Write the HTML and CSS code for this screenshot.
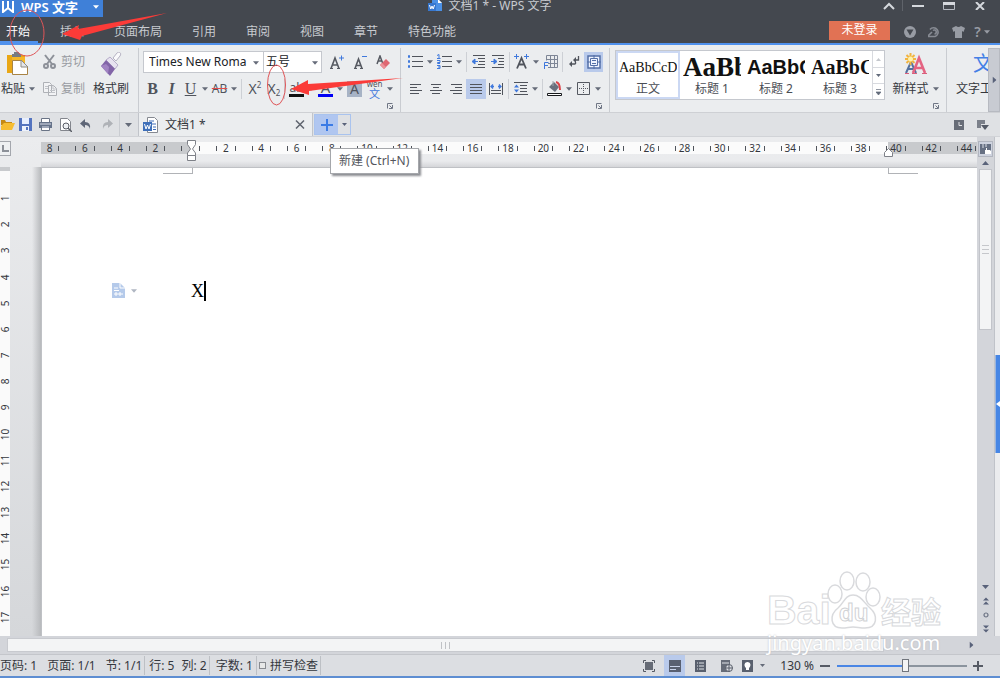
FILE: index.html
```html
<!DOCTYPE html>
<html lang="zh-CN">
<head>
<meta charset="utf-8">
<title>文档1 * - WPS 文字</title>
<link rel="stylesheet" href="styles.css">
</head>
<body>
<svg class="defs" aria-hidden="true">
  <symbol id="caret" viewBox="0 0 7 4"><path d="M0 0h7L3.500 4z" fill="currentColor"/></symbol>
  <symbol id="launch" viewBox="0 0 6 6"><path d="M.5 5.500v-5h5M5.500 2v3.500H2M2.500 2.500l2.500 2.500" fill="none" stroke="#6f7685"/></symbol>
</svg>
<div class="app">
  <header class="header">
    <div class="titlebar">
      <button class="brand"><svg width="12" height="12" viewBox="0 0 12 12"><path d="M1 0v11l5-4 5 4V0M6 0v7" fill="none" stroke="#fff" stroke-width="2"/></svg><span>WPS 文字</span><svg class="caret-icon" width="6" height="4"><use href="#caret"/></svg></button>
      <div class="title"><svg width="14" height="13" viewBox="0 0 14 13"><path d="M4 0h6l4 4v8H4z" fill="#4b90e5"/><path d="M10 0v4h4z" fill="#fff"/><path d="M0 4h8v8H0z" fill="#3777cf"/><path d="M1.500 6l1.300 4L4 7l1.200 3 1.300-4" fill="none" stroke="#fff"/></svg><span>文档1 * - WPS 文字</span></div>
      <div class="window-controls">
        <button aria-label="收起"><svg width="12" height="8"><path d="M1 7l5-5 5 5" fill="none" stroke="#d5d8dd" stroke-width="2"/></svg></button>
        <button aria-label="最小化"><svg width="12" height="8"><path d="M0 4h12" stroke="#d5d8dd" stroke-width="2"/></svg></button>
        <button aria-label="最大化"><svg width="12" height="8"><path d="M.5.500h11v7H.5z" fill="none" stroke="#b5b9c1"/><path d="M0 1.500h12" stroke="#d5d8dd" stroke-width="3"/></svg></button>
        <button aria-label="关闭"><svg width="10" height="8"><path d="M1 0l8 8M9 0L1 8" stroke="#d5d8dd" stroke-width="2"/></svg></button>
      </div>
    </div>
    <div class="menubar">
      <nav class="tabs">
        <button class="tab active">开始</button><button class="tab">插入</button><button class="tab">页面布局</button><button class="tab">引用</button><button class="tab">审阅</button><button class="tab">视图</button><button class="tab">章节</button><button class="tab">特色功能</button>
      </nav>
      <button class="login">未登录</button>
      <div class="header-icons">
        <button aria-label="消息"><svg width="12" height="12"><circle cx="6" cy="6" r="6" fill="#989ca4"/><path d="M2.500 3.500l7 0-3.500 6z" fill="#44484f"/></svg></button>
        <button aria-label="同步"><svg width="12" height="12"><path d="M2 3.500A4.500 4.500 0 1 1 7 10.500H0M0 10l4-4M5 4.500A2 2 0 1 1 6.500 8" fill="none" stroke="#878b93" stroke-width="1.600"/></svg></button>
        <button aria-label="皮肤"><svg width="13" height="12"><path d="M4 0q2.500 2 5 0l4 2-1.500 4-1.500-1v7H3V5L1.500 6 0 2z" fill="#989ca4"/></svg></button>
        <button aria-label="帮助" class="help">?<svg width="6" height="4"><use href="#caret"/></svg></button>
      </div>
    </div>
  </header>

  <section class="ribbon">
    <div class="group clipboard">
      <button class="big paste"><svg width="22" height="24" viewBox="0 0 22 24"><path d="M0 3h18v18H0z" fill="#f5b728"/><path d="M0 3v18h5V5h13V3z" fill="#e9a716"/><path d="M5 2h2V0h5v2h2v3H5z" fill="#777b82"/><path d="M5.500 8.500h9l6 6v8h-15z" fill="#fff" stroke="#a98445"/><path d="M14 8l7 7h-7z" fill="#e4e6ea" stroke="#8f8c85"/></svg><span>粘贴 <svg width="6" height="4"><use href="#caret"/></svg></span></button>
      <div class="small-buttons">
        <button class="disabled"><svg width="14" height="16"><path d="M2 1l7 9M11 1l-7 9" stroke="#8d9199" stroke-width="2"/><circle cx="3" cy="12" r="2" fill="none" stroke="#8d9199" stroke-width="2"/><circle cx="10" cy="12" r="2" fill="none" stroke="#8d9199" stroke-width="2"/></svg>剪切</button>
        <button class="disabled"><svg width="14" height="14"><path d="M.5.500h6l2 2v8h-8zM5.500 3.500h5l3 3v7h-8z" fill="#f2f3f5" stroke="#aeb1b6"/><path d="M10 3.500V7h3.500M7 8.500h5M7 10.500h5M2 4.500h3M2 6.500h3" fill="none" stroke="#c0c3c8"/></svg>复制</button>
      </div>
      <button class="big painter"><svg width="22" height="24" viewBox="0 0 22 24"><path d="M13 6l4-5c2-2 5 0 3 3l-4 5z" fill="#fafafc" stroke="#b5b2c2"/><path d="M6 8l4-3 8 8-3 4z" fill="#e7e3f0" stroke="#b6adca"/><path d="M6 8l9 9-5 7L1 14z" fill="#8265a8"/><path d="M1 14l5-2 3 3-1 7z" fill="#a184c3"/></svg><span>格式刷</span></button>
    </div>

    <div class="group font">
      <div class="row combos">
        <label class="combo family"><select aria-label="字体"><option>Times New Roma</option></select><svg width="6" height="4"><use href="#caret"/></svg></label><label class="combo size"><select aria-label="字号"><option>五号</option></select><svg width="6" height="4"><use href="#caret"/></svg></label>
        <button class="tool wide" aria-label="增大字号"><svg width="14" height="14"><path d="M1 13.500L5 3l4 10.500M2.500 10h5" fill="none" stroke="#555961" stroke-width="1.600"/><path d="M0 13.500h3M7 13.500h3" stroke="#555961"/><path d="M9 3h5M11.500.500v5" stroke="#3f78dc"/></svg></button>
        <button class="tool wide" aria-label="减小字号"><svg width="14" height="14"><path d="M2 13.500L5.500 4 9 13.500M3 10.500h5" fill="none" stroke="#555961" stroke-width="1.600"/><path d="M1 13.500h3M7 13.500h3" stroke="#555961"/><path d="M9 1.500h5" stroke="#3f78dc"/></svg></button>
        <button class="tool wide" aria-label="清除格式"><svg width="14" height="14"><path d="M1 9l3-8 3 8M2 6h4" fill="none" stroke="#555961" stroke-width="1.500"/><path d="M10 4l4 4-6 6-4-4z" fill="#df6873"/><path d="M4 10l2-2 4 4-2 2z" fill="#eb9299"/></svg></button>
      </div>
      <div class="row">
        <button class="tool serif bold">B</button><button class="tool serif italic">I</button><button class="tool serif under">U</button><button class="caret" aria-label="下划线样式"><svg width="6" height="4"><use href="#caret"/></svg></button>
        <button class="tool strike">AB</button><button class="caret" aria-label="删除线样式"><svg width="6" height="4"><use href="#caret"/></svg></button><i class="sep"></i>
        <button class="tool script" aria-label="上标"><span>X<sup>2</sup></span></button><button class="tool script" aria-label="下标"><span>X<sub>2</sub></span></button><i class="sep"></i>
        <button class="tool mark">ab</button><button class="caret" aria-label="突出显示颜色"><svg width="6" height="4"><use href="#caret"/></svg></button>
        <button class="tool color">A</button><button class="caret" aria-label="字体颜色"><svg width="6" height="4"><use href="#caret"/></svg></button>
        <button class="tool shade"><span>A</span></button><button class="tool pinyin wide"><small>wén</small><b>文</b></button><button class="caret pinyin-more" aria-label="拼音指南"><svg width="6" height="4"><use href="#caret"/></svg></button>
      </div>
      <button class="launcher" aria-label="字体设置"><svg width="6" height="6"><use href="#launch"/></svg></button>
    </div>

    <div class="group para">
      <div class="row">
        <button class="tool" aria-label="项目符号"><svg width="15" height="13"><path d="M4 1.500h11M4 6.500h11M4 11.500h11" stroke="#50545c"/><path d="M0 1.500h2M0 6.500h2M0 11.500h2" stroke="#3f78dc" stroke-width="2.400"/></svg></button><button class="caret" aria-label="符号样式"><svg width="6" height="4"><use href="#caret"/></svg></button>
        <button class="tool" aria-label="编号"><svg width="15" height="16"><path d="M5 2.500h10M5 7.500h10M5 12.500h10" stroke="#50545c"/><path d="M0 1.500l2-1v4M0 4.500h3.500M0 6.500h3v2H.5v1H3M0 11.500h3v3H0M1 13h2" fill="none" stroke="#3f78dc"/></svg></button><button class="caret" aria-label="编号样式"><svg width="6" height="4"><use href="#caret"/></svg></button><i class="sep"></i>
        <button class="tool" aria-label="减少缩进"><svg width="13" height="14"><path d="M1 .5h12M6 3.500h7M7 6.500h6M6 9.500h7M1 12.500h12" stroke="#50545c"/><path d="M3 4v5L0 6.500zM2 6.500h4" fill="#3f78dc" stroke="#3f78dc"/></svg></button>
        <button class="tool" aria-label="增加缩进"><svg width="13" height="14"><path d="M1 .5h12M7 3.500h6M8 6.500h5M7 9.500h6M1 12.500h12" stroke="#50545c"/><path d="M3 4v5l3-2.500zM0 6.500h4" fill="#3f78dc" stroke="#3f78dc"/></svg></button><i class="sep"></i>
        <button class="tool" aria-label="文字效果"><svg width="15" height="15"><path d="M3 14.500L7.500 4 12 14.500M5 10.500h5" fill="none" stroke="#50545c" stroke-width="1.800"/><path d="M0 2.500h5M2.500 0v5M10 2.500h5M12.500 0v5" stroke="#3f78dc"/></svg></button><button class="caret" aria-label="文字效果选项"><svg width="6" height="4"><use href="#caret"/></svg></button>
        <button class="tool" aria-label="网格"><svg width="14" height="14"><path d="M2.500.500h11v12H4M2.500 4.500h11M4 8.500h9.500M2.500.500v5M6.500.500v12M10.500.500v12" fill="none" stroke="#7e8696"/><path d="M.5 14V7.500h4M.5 10.500H4" fill="none" stroke="#3f78dc"/></svg></button><i class="sep"></i>
        <button class="tool" aria-label="显示段落标记"><svg width="12" height="14"><path d="M9.500 1v4H5M6.500 9H2M6.500 7v2" fill="none" stroke="#50545c" stroke-width="1.300"/><path d="M7 2v6L4 5zM3 6v6L0 9z" fill="#50545c"/></svg></button>
        <button class="tool selected" aria-label="段落布局"><svg width="14" height="14"><path d="M1 1h12v12H1z" fill="#eef3ff" stroke="#5470a8" stroke-width="1.500"/><path d="M3.500 3.500h7v7h-7zM5 5.500h4M5 8.500h4M7 0v3M7 11v3M0 7h3M11 7h3" fill="none" stroke="#5470a8"/></svg></button>
      </div>
      <div class="row">
        <button class="tool align" aria-label="左对齐"><svg width="12" height="12"><path d="M0 1.500h11M0 4.500h7M0 7.500h12M0 10.500h9" stroke="#50545c"/></svg></button><button class="tool align" aria-label="居中"><svg width="12" height="12"><path d="M1 1.500h10M3 4.500h6M0 7.500h12M2 10.500h8" stroke="#50545c"/></svg></button><button class="tool align" aria-label="右对齐"><svg width="12" height="12"><path d="M1 1.500h11M5 4.500h7M0 7.500h12M3 10.500h9" stroke="#50545c"/></svg></button><button class="tool align selected" aria-label="两端对齐"><svg width="12" height="12"><path d="M0 1.500h12M0 4.500h12M0 7.500h12M0 10.500h12" stroke="#50545c"/></svg></button><button class="tool align" aria-label="分散对齐"><svg width="14" height="12"><path d="M.5 0v12M13.500 0v12M2 7.500h10M2 10.500h10" stroke="#50545c"/><path d="M2 3.500h3M9 3.500h3M4 1.500l-2 2 2 2M10 1.500l2 2-2 2" fill="none" stroke="#3f78dc" stroke-width="1.300"/></svg></button><i class="sep"></i>
        <button class="tool" aria-label="行距"><svg width="14" height="14"><path d="M0 .5h14M6 3.500h7M6 6.500h7M6 9.500h7M0 12.500h14" stroke="#50545c"/><path d="M0 5.500L2.500 2.500 5 5.500zM0 7.500l2.500 3 2.500-3z" fill="#3f78dc"/></svg></button><button class="caret" aria-label="行距选项"><svg width="6" height="4"><use href="#caret"/></svg></button><i class="sep"></i>
        <button class="tool" aria-label="底纹颜色"><svg width="15" height="16"><path d="M2 6l5-5 5 5-4 5z" fill="#69707d"/><path d="M6 0v5" stroke="#a2a6ad"/><path d="M9 1q4 1 4 8" fill="none" stroke="#dc4348" stroke-width="2"/><path d="M.5 12.500h14v2H.5z" fill="#fff" stroke="#17191c"/></svg></button><button class="caret" aria-label="底纹选项"><svg width="6" height="4"><use href="#caret"/></svg></button>
        <button class="tool" aria-label="边框"><svg width="13" height="13"><path d="M.5.500h12v12H.5z" fill="none" stroke="#555961"/><path d="M6.500 2v10M2 6.500h10" stroke="#555961" stroke-dasharray="1 1"/></svg></button><button class="caret" aria-label="边框选项"><svg width="6" height="4"><use href="#caret"/></svg></button>
      </div>
      <button class="launcher" aria-label="段落设置"><svg width="6" height="6"><use href="#launch"/></svg></button>
    </div>

    <div class="gallery">
      <button class="style selected-style"><span class="sample normal">AaBbCcDd</span><span>正文</span></button><button class="style"><span class="sample h1">AaBb</span><span>标题 1</span></button><button class="style"><span class="sample h2">AaBbC</span><span>标题 2</span></button><button class="style"><span class="sample h3">AaBbC</span><span>标题 3</span></button>
      <div class="gallery-scroll"><button class="faint" aria-label="上翻"><svg class="flip" width="5" height="3"><use href="#caret"/></svg></button><button aria-label="下翻"><svg width="5" height="3"><use href="#caret"/></svg></button><button aria-label="更多样式"><svg width="5" height="6"><path d="M0 .5h5M0 3h5L2.500 6z" stroke="#626a7a" fill="#626a7a" stroke-width=".7"/></svg></button></div>
    </div>
    <div class="group new-style">
      <button class="big"><svg width="22" height="22" viewBox="0 0 22 22"><path d="M1 20L6 9l5 11M3 16h6" fill="none" stroke="#53719f" stroke-width="2"/><path d="M8 20L14 5l6 15M10 15h8" fill="none" stroke="#e46482" stroke-width="2.600"/><path d="M0 20.500h4M7 20.500h5M17 20.500h5" stroke="#d85e7c"/><path d="M5.500 0v12M0 6h11M1.500 2l8 8M9.500 2l-8 8" stroke="#f2b43f" stroke-width="2"/><circle cx="5.500" cy="6" r="2.500" fill="#fff2a8"/></svg><span>新样式 <svg width="6" height="4"><use href="#caret"/></svg></span></button>
      <button class="launcher" aria-label="样式设置"><svg width="6" height="6"><use href="#launch"/></svg></button>
    </div>
    <div class="text-tools"><button class="big"><b>文</b><span>文字工具</span></button></div>
    <button class="ribbon-next" aria-label="更多工具"><svg class="right" width="7" height="4"><use href="#caret"/></svg></button>
  </section>

  <section class="docbar">
    <div class="quick">
      <button aria-label="打开"><svg width="14" height="12"><path d="M0 1h4l1 2h6v3H0z" fill="#c58a13"/><path d="M0 11V7l3-3h11l-3 7z" fill="#f6bd31"/></svg></button>
      <button aria-label="保存"><svg width="13" height="13"><path d="M0 0h13v13H0z" fill="#5474bf"/><path d="M3 0h7v6H3z" fill="#e7efff"/><path d="M3 8h7v5H3z" fill="#eef3fc"/><path d="M7 9h2v3H7z" fill="#5474bf"/></svg></button>
      <button aria-label="打印"><svg width="13" height="13"><path d="M2.500.500h8v4h-8zM2.500 8.500h8v4h-8z" fill="#fff" stroke="#6a7486"/><path d="M0 4h13v6H0z" fill="#66738a"/><path d="M1 6h11M3 9h7" stroke="#d9dee9"/></svg></button>
      <button aria-label="打印预览"><svg width="13" height="14"><path d="M1.500.500h7l3 3v9h-10z" fill="#fff" stroke="#83868d"/><circle cx="7" cy="8" r="3" fill="#eef0f3" stroke="#5a5e66"/><path d="M9 10l4 4" stroke="#5a5e66" stroke-width="1.500"/></svg></button>
      <button aria-label="撤销"><svg width="11" height="11"><path d="M5 0v3q6 0 5 7-1-4-5-4v3L0 4.500z" fill="#5e6677"/></svg></button>
      <button aria-label="重做" class="redo"><svg width="11" height="11"><path d="M6 0v3Q0 3 1 10q1-4 5-4v3l5-4.500z" fill="#afb2b7"/></svg></button>
      <button class="quick-more" aria-label="自定义"><svg width="7" height="4"><use href="#caret"/></svg></button>
    </div>
    <div class="doctab"><svg width="16" height="16"><path d="M4.500.500h7l3 3v12h-10z" fill="#fff" stroke="#858991"/><path d="M6 4h5M7 7h6M10 10h3M10 12.500h3" stroke="#3f6db8"/><path d="M0 5h9v9H0z" fill="#3e6fb9"/><path d="M1.500 7l1.500 5 1.500-4L6 12l1.500-5" fill="none" stroke="#fff"/></svg><span>文档1 *</span><button aria-label="关闭文档"><svg width="10" height="9"><path d="M1 .5l8 8M9 .5l-8 8" stroke="#60656f" stroke-width="1.500"/></svg></button></div>
    <div class="newdoc"><button class="plus" aria-label="新建"><svg width="12" height="12"><path d="M0 6h12M6 0v12" stroke="#3b7be5" stroke-width="2"/></svg></button><button class="plus-more" aria-label="新建选项"><svg width="5" height="3"><use href="#caret"/></svg></button><div class="tooltip" role="tooltip">新建 (Ctrl+N)</div></div>
    <div class="doc-right"><button aria-label="历史"><svg width="10" height="10"><path d="M0 0h10v10H0z" fill="#686d78"/><path d="M5 2v3.500h3" fill="none" stroke="#e2e3e6"/></svg></button><button aria-label="文档列表"><svg width="12" height="10"><path d="M0 0h8v4H4v4H0z" fill="#7b808a"/><path d="M4 5h8L8 10z" fill="#555b67"/></svg></button></div>
  </section>

  <main class="workspace">
    <div class="left-rule">
      <button class="tabstop" aria-label="制表位"><svg width="7" height="7"><path d="M1 0v6h6" fill="none" stroke="#8c9098" stroke-width="2"/></svg></button>
      <div class="vruler"><span>1</span><span>2</span><span>3</span><span>4</span><span>5</span><span>6</span><span>7</span><span>8</span><span>9</span><span>10</span><span>11</span><span>12</span><span>13</span><span>14</span><span>15</span><span>16</span><span>17</span></div>
    </div>
    <div class="canvas">
      <div class="hruler">
        <div class="scale"><span>8</span><span>6</span><span>4</span><span>2</span><span></span><span>2</span><span>4</span><span>6</span><span>8</span><span>10</span><span>12</span><span>14</span><span>16</span><span>18</span><span>20</span><span>22</span><span>24</span><span>26</span><span>28</span><span>30</span><span>32</span><span>34</span><span>36</span><span>38</span><span>40</span><span>42</span><span>44</span></div>
        <svg class="indent-left" width="9" height="21"><path d="M.5.500h8v4l-3 4.500 3 4v2.500h-8V13l3-4-3-4.500zM.5 15.500h8v5h-8z" fill="#fff" stroke="#7e8188"/></svg>
        <svg class="indent-right" width="9" height="9"><path d="M.5 8.500v-4l4-4 4 4v4z" fill="#fff" stroke="#7e8188"/></svg>
      </div>
      <article class="page">
        <i class="crop crop-left"></i><i class="crop crop-right"></i>
        <div class="line"><button class="para-tool" aria-label="段落工具"><svg width="13" height="15"><path d="M0 0h8l5 5v10H0z" fill="#b5caea"/><path d="M8 0v5h5M2 5h4M2 7.500h5M2 11h9M4 9v4M8 9v4" fill="none" stroke="#fff"/></svg><svg width="6" height="4"><use href="#caret"/></svg></button><span class="typed">X</span></div>
      </article>
    </div>
    <aside class="vscroll">
      <button class="select-browse" aria-label="选择窗格"><svg width="11" height="11"><path d="M0 0h11v10H0z" fill="#667083"/><path d="M3 0v4M6 0v3" stroke="#dce0e8"/><path d="M5 10V6h1V4h1v2h3l1 1v3z" fill="#fff"/></svg></button>
      <button class="up" aria-label="向上"><svg class="flip" width="7" height="4"><use href="#caret"/></svg></button>
      <div class="vthumb"><i></i><i></i><i></i></div>
      <div class="nav-buttons"><button aria-label="向下"><svg width="7" height="4"><use href="#caret"/></svg></button><button aria-label="上一页"><svg width="6" height="8"><path d="M0 3.500l3-3 3 3zM0 7.500l3-3 3 3z" fill="#59627a"/></svg></button><button aria-label="浏览对象"><svg width="6" height="6"><circle cx="3" cy="3" r="2" fill="none" stroke="#6c7384" stroke-width="1.200"/></svg></button><button aria-label="下一页"><svg width="6" height="8"><path d="M0 .5h6l-3 3zM0 4.500h6l-3 3z" fill="#59627a"/></svg></button></div>
    </aside>
    <aside class="dock"><button aria-label="展开任务窗格"><svg width="4" height="6"><path d="M4 0v6L0 3z" fill="#fff"/></svg></button></aside>
  </main>

  <div class="hscroll"><div class="hthumb"><i></i><i></i><i></i></div><button class="go-right" aria-label="向右"><svg class="right" width="7" height="4"><use href="#caret"/></svg></button></div>

  <footer class="status">
    <div class="cell pages"><span>页码: 1</span><span>页面: 1/1</span><span>节: 1/1</span></div>
    <div class="cell position"><span>行: 5</span><span>列: 2</span></div>
    <div class="cell words"><span>字数: 1</span></div>
    <label class="cell spell"><input type="checkbox">拼写检查</label>
    <div class="views">
      <button aria-label="全屏"><svg width="12" height="12"><path d="M.5 3V.5H3M9 .5h2.500V3M11.500 9v2.500H9M3 11.500H.5V9" fill="none" stroke="#565b65"/><path d="M2 2h8v8H2z" fill="#666b76"/></svg></button>
      <button class="selected" aria-label="页面视图"><svg width="12" height="12"><path d="M0 0h12v12H0z" fill="#596071"/><path d="M1 6.500h10M1 9.500h6" stroke="#c9d3ea"/></svg></button>
      <button aria-label="大纲视图"><svg width="11" height="12"><path d="M0 0h11v12H0z" fill="#59606e"/><path d="M2 3h1M4 3h5M2 6h1M4 6h5M2 9h1M4 9h5" stroke="#e0e3e8"/></svg></button>
      <button aria-label="网页视图"><svg width="12" height="12"><path d="M0 0h9v12H0z" fill="#666c78"/><path d="M1 3h7" stroke="#e0e3e8"/><circle cx="8" cy="8" r="3.500" fill="#dfe1e6" stroke="#555b67"/><path d="M5 8h6M8 5v6" stroke="#555b67"/></svg></button>
      <button aria-label="护眼模式"><svg width="11" height="12"><path d="M0 0h11v12H0z" fill="#59606e"/><path d="M4 8C1 5 3 2 5.500 2S10 5 7 8v2H4z" fill="#fff"/></svg></button>
      <button class="caret" aria-label="视图选项"><svg width="5" height="3"><use href="#caret"/></svg></button>
    </div>
    <div class="zoom"><span>130 %</span><button aria-label="缩小"><svg width="10" height="10"><path d="M0 5h10" stroke="#565b65" stroke-width="2"/></svg></button><input type="range" aria-label="显示比例" min="0" max="100" value="53"><button aria-label="放大"><svg width="10" height="10"><path d="M0 5h10M5 0v10" stroke="#565b65" stroke-width="2"/></svg></button></div>
  </footer>

  <svg class="notes" width="410" height="120" aria-hidden="true">
    <g fill="none" stroke="#df5558"><ellipse cx="27" cy="33" rx="17" ry="23"/><ellipse cx="276.500" cy="85" rx="9" ry="20"/></g>
    <g fill="#fb3b38"><path d="M62 34l17-9-1 4 89-16-85 23-2 4z"/><path d="M291 89l17-9v4l95-6-94 13v4z"/></g>
  </svg>
  <div class="watermark" aria-hidden="true">
    <div class="mark-row"><span class="mark-bai">Bai</span><div class="paw"><svg width="54" height="63"><g fill="#fff" stroke="#d9dadd" stroke-width="1.500"><ellipse cx="8" cy="27" rx="7" ry="9"/><ellipse cx="20" cy="14" rx="7" ry="9"/><ellipse cx="36" cy="15" rx="7" ry="9"/><ellipse cx="46" cy="30" rx="7" ry="9"/><path d="M26 28c-8 0-9 8-15 13-9 7-8 20 4 20 5 0 7-1 11-1s7 1 12 1c13 0 13-13 5-20-6-5-9-13-17-13z"/></g></svg><span>du</span></div><span class="mark-cn">经验</span></div>
    <span class="mark-url">jingyan.baidu.com</span>
  </div>
</div>
</body>
</html>
```
FILE: styles.css
```css
* { box-sizing: border-box; }
body {
  margin: 0;
  font: 12px/16px "Noto Sans", "Noto Sans CJK SC", sans-serif;
  color: #34373d;
  background: #dcdee2;
}
button {
  display: flex;
  align-items: center;
  justify-content: center;
  padding: 0;
  border: 0;
  background: none;
  color: inherit;
  font: inherit;
  white-space: nowrap;
}
svg { flex: none; }
.defs { display: none; }
.app {
  position: relative;
  display: flex;
  flex-direction: column;
  min-height: 100vh;
  overflow: hidden;
}
.flip { transform: rotate(180deg); }
.right { transform: rotate(-90deg); }

/* Title and menu */
.header { background: #44484f; border-bottom: 2px solid #4f91ed; color: #c8cbd0; }
.titlebar { display: flex; height: 17px; }
.brand {
  width: 103px;
  gap: 7px;
  justify-content: flex-start;
  padding: 0 0 3px 2px;
  background: #3f80d8;
  color: #fff;
  font-size: 13px;
  font-weight: 600;
  line-height: 14px;
}
.caret-icon { margin-left: 8px; }
.title { flex: 1; display: flex; justify-content: center; align-items: center; gap: 7px; padding-bottom: 6px; line-height: 11px; }
.window-controls { display: flex; padding: 0 5px 6px 0; width: 124px; }
.window-controls button { flex: 1; }
.window-controls button:first-child { flex: none; width: 27px; border-right: 1px solid #5f636a; }
.menubar { display: flex; height: 26px; align-items: center; padding-right: 6px; }
.tabs { display: flex; gap: 30px; padding-left: 6px; flex: 1; align-self: stretch; }
.tab { position: relative; padding-top: 3px; }
.tab.active { color: #fff; }
.tab.active::after { content: ""; position: absolute; left: -6px; right: -8px; bottom: 0; height: 2px; background: #4f91ed; }
.login { width: 61px; height: 19px; background: #e17254; color: #fff; }
.header-icons { display: flex; margin-left: 8px; padding-top: 3px; color: #989ca4; }
.header-icons button { width: 24px; }
.header-icons .help { gap: 3px; font-size: 14px; font-weight: 600; }

/* Ribbon */
.ribbon { display: flex; height: 67px; padding-top: 3px; background: #ebedef; overflow: hidden; }
.group { display: grid; grid-template-rows: 27px 27px 8px; border-right: 1px solid #c9ccd1; flex: none; }
.group .big { grid-row: 1 / 3; }
.big { display: grid; grid-template-rows: 32px 18px; justify-items: center; align-items: center; align-content: start; }
.big span svg { margin: 0 0 2px 1px; color: #656b79; }
.clipboard { grid-template-columns: 36px 53px 44px; width: 139px; }
.small-buttons { grid-row: 1 / 3; display: grid; grid-template-rows: 27px 27px; padding-left: 7px; }
.small-buttons button { justify-content: flex-start; gap: 4px; }
.disabled { color: #989ba1; }
.font { width: 262px; padding-left: 4px; }
.para { width: 209px; padding-left: 5px; }
.row { display: flex; align-items: center; }
.combo { position: relative; display: flex; height: 22px; }
.combo select {
  width: 100%;
  appearance: none;
  border: 1px solid #c5c8ce;
  border-radius: 0;
  background: #fff;
  color: #202226;
  padding: 0 0 0 5px;
  font: 12px/20px "Noto Sans", "Noto Sans CJK SC", sans-serif;
}
.combo svg { position: absolute; right: 4px; top: 10px; color: #656b79; }
.family { width: 120px; }
.family select { border-right: 0; }
.size { width: 59px; margin-right: 3px; }
.size select { padding-left: 2px; }
.tool { width: 19px; height: 20px; flex: none; color: #50545c; }
.tool.wide { width: 23px; }
.tool.align { width: 20px; }
.selected { background: #b9caeb; }
.caret { width: 10px; height: 20px; color: #656b79; flex: none; }
.sep { width: 1px; height: 20px; margin: 0 2px; background: #cdd0d5; }
.serif { font: 16px/20px "Liberation Serif", serif; }
.bold { font-weight: bold; }
.italic { font-style: italic; font-weight: bold; }
.under { text-decoration: underline; }
.strike { text-decoration: line-through #e34b4b; }
.script { font-size: 14px; padding-left: 3px; }
.script span { display: flex; align-items: center; }
.script sup, .script sub { font-size: 8px; line-height: 8px; }
.script sup { align-self: flex-start; }
.script sub { align-self: flex-end; }
.mark, .color { height: 16px; line-height: 13px; border-bottom: 3px solid #111; }
.color { border-color: #0000f5; width: 15px; margin: 0 2px; font-size: 15px; }
.mark { width: 15px; margin: 0 2px; }
.shade span { width: 15px; background: #a7b3c5; font-size: 14px; }
.pinyin { flex-direction: column; color: #3f78dc; }
.tool.pinyin { width: 21px; }
.pinyin small { font-size: 8px; line-height: 9px; color: #50545c; }
.pinyin b { font-size: 11px; line-height: 11px; font-weight: 400; }
.launcher { justify-self: end; margin-right: 7px; grid-row: 3; }
.gallery { display: flex; flex: none; height: 50px; margin: 2px 0 0 5px; border: 1px solid #c5c8ce; background: #fff; }
.style { width: 64px; display: grid; grid-template-rows: 29px 16px; overflow: hidden; align-content: start; justify-items: center; padding: 0 2px; color: #4a4d54; border: 1px solid transparent; }
.selected-style { border: 2px solid #cbd8f3; padding: 0 1px; grid-template-rows: 28px 16px; }
.sample { width: 100%; overflow: hidden; text-align: left; color: #111; }
.normal { font: 14px/29px "Liberation Serif", serif; }
.h1 { font: bold 27px/34px "Liberation Serif", serif; }
.h2 { font: bold 20px/32px "Liberation Sans", sans-serif; }
.h3 { font: bold 20px/32px "Liberation Serif", serif; }
.gallery-scroll { width: 12px; display: grid; grid-template-rows: 1fr 1fr 1fr; border-left: 1px solid #d8dadf; color: #626a7a; }
.gallery-scroll button + button { border-top: 1px solid #d8dadf; }
.gallery-scroll .faint { color: #c4c7cc; }
.new-style { width: 62px; }
.text-tools { flex: 1; min-width: 0; overflow: hidden; padding-left: 9px; }
.text-tools .big { justify-items: start; }
.text-tools b { font-size: 20px; font-weight: 400; color: #4380e6; padding-left: 17px; }
.ribbon-next { width: 12px; flex: none; background: #c8cbd2; border: 1px solid #b7bac1; color: #59627a; }

/* Document tabs */
.docbar { display: flex; height: 25px; background: #dfe1e4; border-top: 1px solid #ced0d4; border-bottom: 1px solid #d1d3d7; }
.quick { display: flex; width: 139px; border-right: 1px solid #c1c4ca; color: #656b79; }
.quick button { width: 20px; flex: none; }
.quick button:first-child { width: 15px; }
.quick .redo { width: 25px; border-right: 1px solid #c9ccd1; }
.quick .quick-more { width: 17px; }
.doctab { display: flex; align-items: center; gap: 6px; width: 174px; padding: 0 7px 0 4px; background: #ebedef; border-right: 1px solid #c1c4ca; }
.doctab button { margin-left: auto; }
.newdoc { position: relative; display: flex; margin: 1px; border: 1px solid #a9c3ee; color: #59627a; }
.plus { width: 23px; background: #b0c6f0; }
.plus-more { width: 12px; }
.tooltip { position: absolute; z-index: 3; left: 15px; top: 33px; padding: 4px 9px 4px 8px; background: #fff; border: 1px solid #a5a7ab; box-shadow: 2px 2px 2px #8b8d92; white-space: nowrap; color: #53565d; }
.doc-right { display: flex; margin-left: auto; padding-right: 5px; }
.doc-right button { width: 24px; }

/* Editing area */
.workspace { flex: 1; display: flex; background: linear-gradient(#ebecee, #d5d7da); }
.left-rule { width: 41px; display: flex; flex-direction: column; background: linear-gradient(90deg, transparent 32px, #b8babd 41px) bottom / 100% calc(100% - 30px) no-repeat; }
.tabstop { width: 11px; height: 15px; margin: 4px 0 11px; border: 1px solid #a4a7ad; border-left: 0; background: #eef0f2; }
.vruler { width: 10px; flex: 1; display: flex; flex-direction: column; padding: 14px 0 6px; background: #fafafa; border-top: 4px solid #c8cacd; font-size: 10px; line-height: 10px; }
.vruler span { flex: 1; display: flex; align-items: center; justify-content: center; writing-mode: vertical-rl; transform: rotate(180deg); }
.canvas { flex: 1; min-width: 0; display: flex; flex-direction: column; }
.hruler { position: relative; height: 30px; padding-top: 5px; background: linear-gradient(transparent 24px, #d5d6d9); }
.hruler .scale { display: flex; height: 12px; overflow: hidden; padding-right: 1px; background: linear-gradient(90deg, #c8cacd 16%, #fbfbfb 16% 90.5%, #c8cacd 90.5%); }
.scale span { flex: 1 0 0; min-width: 0; display: flex; justify-content: space-between; align-items: center; padding: 0 8px; font-size: 10px; line-height: 12px; }
.scale span::before, .scale span::after { content: ""; width: 1px; height: 5px; background: #50545b; }
.scale span:first-child { margin-left: -9px; }
.scale span:last-child { margin-right: -8px; }
.indent-left { position: absolute; left: 16%; top: 3px; margin-left: -4px; }
.indent-right { position: absolute; left: 90.5%; top: 11px; margin-left: -4px; }
.page { position: relative; flex: 1; background: #fff; border: 1px solid #bfc1c5; border-width: 1px 0 0 1px; padding: 109px 0 0 70px; }
.crop { position: absolute; top: 0; width: 30px; height: 6px; border: 1px solid #b1b3b7; border-top: 0; }
.crop-left { right: calc(84% - 1px); border-left: 0; }
.crop-right { left: 90.5%; border-right: 0; }
.line { display: flex; align-items: center; gap: 54px; height: 27px; }
.para-tool { gap: 6px; color: #afb6c2; }
.typed { font: 18px/20px "Liberation Serif", serif; color: #000; border-right: 2px solid #000; }
.vscroll { width: 18px; display: flex; flex-direction: column; align-items: center; background: #d3d5da; border-right: 1px solid #c0c3c9; color: #59627a; }
.select-browse { width: 15px; height: 16px; margin-top: 4px; border: 1px solid #b1b5bf; background: #ced3df; }
.up { height: 12px; }
.vthumb { width: 13px; height: 161px; display: flex; flex-direction: column; align-items: center; justify-content: center; gap: 3px; background: #f3f4f5; border: 1px solid #c2c4ca; }
.vthumb i { width: 7px; height: 1px; background: #c5c7cb; }
.nav-buttons { display: grid; grid-template-rows: repeat(4, 14px); margin-top: auto; }
.nav-buttons button { width: 14px; }
.dock { width: 5px; display: flex; align-items: center; background: #ebecee; }
.dock button { width: 5px; height: 98px; margin-top: 34px; background: #4686e5; border-left: 1px solid #98b5e0; justify-content: flex-end; }

/* Bottom scroll and status */
.hscroll { display: flex; align-items: center; height: 19px; padding: 0 25px 0 7px; background: #d3d5da; color: #59627a; border-bottom: 1px solid #c4c6cb; }
.hthumb { flex: 1; display: flex; justify-content: center; align-items: center; gap: 3px; height: 14px; background: #f3f4f5; border: 1px solid #c8cacf; }
.hthumb i { width: 1px; height: 7px; background: #bfc1c5; }
.go-right { margin-left: 84px; }
.status { display: flex; height: 23px; background: #dcdee2; border-bottom: 2px solid #5e8ed2; }
.cell { display: flex; align-items: center; border-right: 1px solid #bdc0c5; margin: 1px 0; }
.pages { gap: 10px; padding-right: 2px; }
.position { gap: 7px; padding: 0 2px 0 4px; }
.words { padding: 0 3px 0 6px; }
.spell { padding: 0 2px; gap: 4px; }
.spell input { appearance: none; width: 7px; height: 7px; margin: 0; border: 1px solid #888b91; background: #e7e8e8; }
.views { display: flex; margin-left: auto; }
.views button { width: 21px; margin-right: 5px; height: 21px; }
.views button:nth-child(4) { margin-right: 0; }
.views button:nth-child(5) { margin-right: -1px; }
.views .caret { width: 10px; margin-right: 13px; }
.zoom { display: flex; align-items: center; gap: 6px; padding-right: 17px; }
.zoom input { appearance: none; width: 130px; height: 14px; margin: 0 0 0 1px; background: linear-gradient(90deg, #4a86e5 53%, #8b949e 53%) center / 100% 2px no-repeat; }
.zoom input::-webkit-slider-thumb { appearance: none; width: 7px; height: 13px; background: #f4f4f4; border: 1px solid #71757c; }

/* Annotations */
.notes { position: absolute; left: 0; top: 0; z-index: 4; pointer-events: none; }
.watermark { position: absolute; z-index: 4; right: 54px; bottom: 22px; pointer-events: none; color: #fff; width: 179px; }
.mark-row { display: flex; align-items: flex-end; height: 63px; }
.mark-bai { font: bold 41px/40px "Liberation Sans", sans-serif; -webkit-text-stroke: 1px #d9dadd; width: 60px; white-space: nowrap; }
.paw { position: relative; width: 54px; height: 63px; }
.paw span { position: absolute; left: 12px; top: 32px; font: bold 24px/28px "Liberation Sans", sans-serif; -webkit-text-stroke: 1px #d0d2d5; }
.mark-cn { font: bold 30px/40px "Noto Sans CJK SC", sans-serif; -webkit-text-stroke: 1px #d7d9dc; }
.mark-url { display: block; font-size: 20px; line-height: 26px; text-shadow: 0 0 2px #b9bbc0; }
```
